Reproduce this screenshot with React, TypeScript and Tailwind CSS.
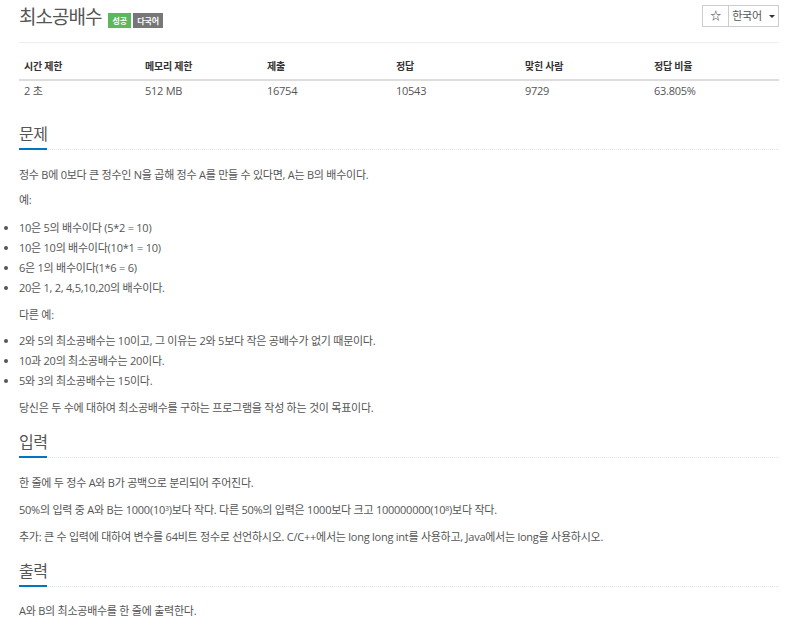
// BOJ style problem page: 최소공배수

const stats = [
  { label: "시간 제한", value: "2 초", w: "w-[121px]" },
  { label: "메모리 제한", value: "512 MB", w: "w-[122px]" },
  { label: "제출", value: "16754", w: "w-[129px]" },
  { label: "정답", value: "10543", w: "w-[129px]" },
  { label: "맞힌 사람", value: "9729", w: "w-[129px]" },
  { label: "정답 비율", value: "63.805%", w: "" },
];

const SectionTitle = ({ title, className }: { title: string; className?: string }) => (
  <div className={`border-b border-dotted border-[#dde4ea] ${className ?? ""}`}>
    <h2 className="-mb-px inline-block border-b-2 border-[#0076c0] pb-[4px] text-[16px] leading-[20px] tracking-[-0.5px] text-[#555]">
      {title}
    </h2>
  </div>
);

export default function App() {
  return (
    <div className="min-h-[637px] w-[792px] bg-white font-['Open_Sans','Noto_Sans_CJK_KR',sans-serif] text-[11px] tracking-[-0.25px] text-[#555]">
      <div className="ml-[19px] w-[760px]">
        {/* title row */}
        <div className="flex items-start justify-between pt-[5px]">
          <div className="flex items-start">
            <h1 className="text-[19px] leading-[24px] tracking-[-1px] text-[#555]">최소공배수</h1>
            <span className="ml-[7px] mt-[8px] bg-[#5cb85c] px-[4px] text-[8px] font-bold leading-[15px] tracking-normal text-white">
              성공
            </span>
            <span className="ml-[2px] mt-[8px] bg-[#777] px-[4px] text-[8px] font-bold leading-[15px] tracking-normal text-white">
              다국어
            </span>
          </div>
          <div className="flex h-[22px]">
            <button className="flex w-[27px] items-center justify-center border border-[#ccc] text-[11px] text-[#333]">
              ☆
            </button>
            <button className="-ml-px flex w-[51px] items-center justify-center gap-[7px] border border-[#ccc] text-[11px] text-[#555]">
              한국어
              <span className="h-0 w-0 border-x-[3px] border-t-[3px] border-x-transparent border-t-[#333]" />
            </button>
          </div>
        </div>
        <div className="mt-[13px] border-b border-[#eee]" />

        {/* stats table */}
        <table className="mt-[10px] w-full border-collapse text-left">
          <thead>
            <tr className="border-b-2 border-[#ddd]">
              {stats.map((s) => (
                <th key={s.label} className={`${s.w} px-[5px] py-[5px] text-[10px] font-bold leading-[16px] text-[#333]`}>
                  {s.label}
                </th>
              ))}
            </tr>
          </thead>
          <tbody>
            <tr>
              {stats.map((s) => (
                <td key={s.label} className="px-[5px] pb-[5px] pt-[2px] leading-[16px]">
                  {s.value}
                </td>
              ))}
            </tr>
          </tbody>
        </table>

        {/* 문제 */}
        <SectionTitle title="문제" className="mt-[20px]" />
        <p className="mt-[16px] leading-[17px]">정수 B에 0보다 큰 정수인 N을 곱해 정수 A를 만들 수 있다면, A는 B의 배수이다.</p>
        <p className="mt-[8px] leading-[17px]">예:</p>
        <ul className="mt-[10px] list-disc pl-0 leading-[20px]">
          <li>10은 5의 배수이다 (5*2 = 10)</li>
          <li>10은 10의 배수이다(10*1 = 10)</li>
          <li>6은 1의 배수이다(1*6 = 6)</li>
          <li>20은 1, 2, 4,5,10,20의 배수이다.</li>
        </ul>
        <p className="mt-[8px] leading-[17px]">다른 예:</p>
        <ul className="mt-[8px] list-disc pl-0 leading-[20px]">
          <li>2와 5의 최소공배수는 10이고, 그 이유는 2와 5보다 작은 공배수가 없기 때문이다.</li>
          <li>10과 20의 최소공배수는 20이다.</li>
          <li>5와 3의 최소공배수는 15이다.</li>
        </ul>
        <p className="mt-[8px] leading-[17px]">당신은 두 수에 대하여 최소공배수를 구하는 프로그램을 작성 하는 것이 목표이다.</p>

        {/* 입력 */}
        <SectionTitle title="입력" className="mt-[16px]" />
        <p className="mt-[16px] leading-[17px]">한 줄에 두 정수 A와 B가 공백으로 분리되어 주어진다.</p>
        <p className="mt-[10px] leading-[17px]">
          50%의 입력 중 A와 B는 1000(10<sup className="text-[7px]">3</sup>)보다 작다. 다른 50%의 입력은 1000보다 크고 100000000(10
          <sup className="text-[7px]">8</sup>)보다 작다.
        </p>
        <p className="mt-[10px] leading-[17px]">
          추가: 큰 수 입력에 대하여 변수를 64비트 정수로 선언하시오. C/C++에서는 long long int를 사용하고, Java에서는 long을 사용하시오.
        </p>

        {/* 출력 */}
        <SectionTitle title="출력" className="mt-[16px]" />
        <p className="mt-[15px] leading-[17px]">A와 B의 최소공배수를 한 줄에 출력한다.</p>
      </div>
    </div>
  );
}
